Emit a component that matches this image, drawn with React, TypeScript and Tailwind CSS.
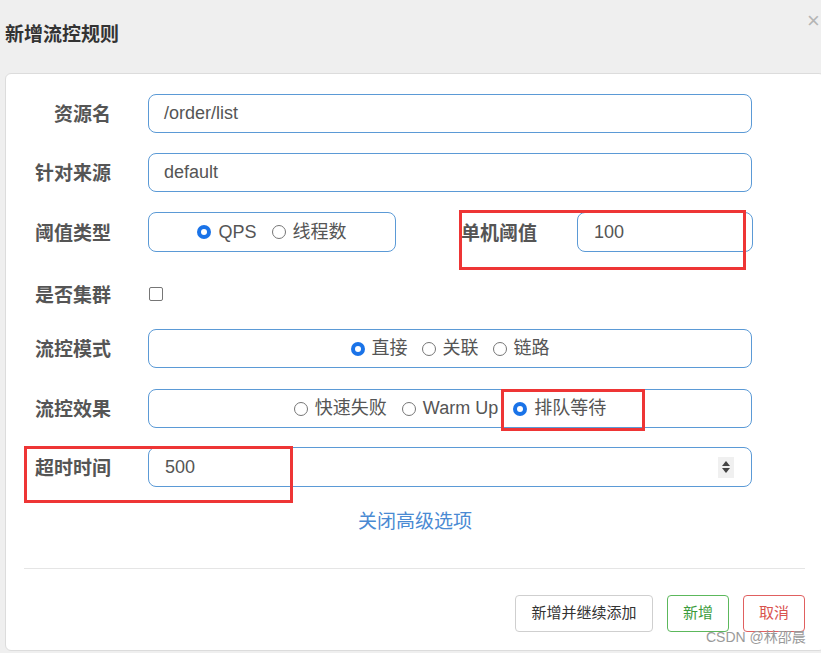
import React from 'react';

const font = { fontFamily: '"Liberation Sans", "Noto Sans CJK SC", sans-serif' };

const Radio: React.FC<{ label: string; checked?: boolean }> = ({ label, checked }) => (
  <span className="flex items-center gap-[7px]">
    {checked ? (
      <span className="w-[14px] h-[14px] rounded-full bg-[#1a73e8] flex items-center justify-center">
        <span className="w-[6px] h-[6px] rounded-full bg-white" />
      </span>
    ) : (
      <span className="w-[14px] h-[14px] rounded-full border border-[#767676] bg-white" />
    )}
    <span>{label}</span>
  </span>
);

const Label: React.FC<{ text: string }> = ({ text }) => (
  <div className="w-[105px] shrink-0 pt-[4px] text-right font-bold text-[19px] text-[#555]">{text}</div>
);

const Box: React.FC<{ children: React.ReactNode; className?: string }> = ({ children, className }) => (
  <div className={'h-[39px] border border-[#5b9ad6] rounded-[8px] flex items-center text-[18px] text-[#555] ' + (className || '')}>
    {children}
  </div>
);

const App: React.FC = () => {
  return (
    <div className="relative w-[821px] h-[653px] bg-[#efefef] overflow-hidden" style={font}>
      {/* header */}
      <div className="h-[73px] flex items-start">
        <div className="mt-[21px] ml-[5px] font-bold text-[19px] text-[#333]">新增流控规则</div>
        <div className="absolute left-[807px] top-[4px] text-[22px] text-[#b5b5b5]">×</div>
      </div>

      {/* card */}
      <div className="ml-[5px] w-[820px] h-[578px] bg-white border border-[#dcdcdc] rounded-[6px] pt-[20px] flex flex-col">
        <div className="flex items-center h-[39px]">
          <Label text="资源名" />
          <Box className="ml-[37px] w-[604px] pl-[15px]">/order/list</Box>
        </div>

        <div className="flex items-center h-[39px] mt-[20px]">
          <Label text="针对来源" />
          <Box className="ml-[37px] w-[604px] pl-[15px]">default</Box>
        </div>

        <div className="flex items-center h-[40px] mt-[20px]">
          <Label text="阈值类型" />
          <Box className="ml-[37px] w-[248px] h-[40px] justify-center gap-[15px]">
            <Radio label="QPS" checked />
            <Radio label="线程数" />
          </Box>
          <div className="ml-[65px] w-[80px] pt-[4px] font-bold text-[19px] text-[#555]">单机阈值</div>
          <Box className="ml-[36px] w-[176px] h-[40px] pl-[16px]">100</Box>
        </div>

        <div className="flex items-center h-[40px] mt-[22px]">
          <Label text="是否集群" />
          <span className="ml-[38px] w-[14px] h-[14px] border border-[#767676] rounded-[2px] bg-white" />
        </div>

        <div className="flex items-center h-[39px] mt-[15px]">
          <Label text="流控模式" />
          <Box className="ml-[37px] w-[604px] justify-center gap-[14px]">
            <Radio label="直接" checked />
            <Radio label="关联" />
            <Radio label="链路" />
          </Box>
        </div>

        <div className="flex items-center h-[39px] mt-[21px]">
          <Label text="流控效果" />
          <Box className="ml-[37px] w-[604px] justify-center gap-[15px]">
            <Radio label="快速失败" />
            <Radio label="Warm Up" />
            <Radio label="排队等待" checked />
          </Box>
        </div>

        <div className="flex items-center h-[40px] mt-[19px]">
          <Label text="超时时间" />
          <Box className="ml-[37px] w-[604px] h-[40px] pl-[16px] pr-[17px] justify-between">
            <span>500</span>
            <span className="w-[16px] h-[21px] bg-[#f0f0f0] flex flex-col items-center justify-center gap-[2px]">
              <svg width="8" height="5" viewBox="0 0 8 5"><path d="M4 0L8 5H0Z" fill="#444" /></svg>
              <svg width="8" height="5" viewBox="0 0 8 5"><path d="M0 0H8L4 5Z" fill="#444" /></svg>
            </span>
          </Box>
        </div>

        <div className="mt-[21px] text-center text-[19px] text-[#4a8ad3]">关闭高级选项</div>

        <div className="mt-[31px] ml-[18px] w-[781px] border-t border-[#e5e5e5]" />

        <div className="mt-[26px] flex justify-end gap-[14px] pr-[19px]">
          <button className="w-[138px] h-[37px] border border-[#cfcfcf] rounded-[4px] text-[15px] text-[#333] bg-white">
            新增并继续添加
          </button>
          <button className="w-[62px] h-[37px] border border-[#5cb85c] rounded-[4px] text-[15px] text-[#3c9c3c] bg-white">
            新增
          </button>
          <button className="w-[62px] h-[37px] border border-[#e06060] rounded-[4px] text-[15px] text-[#d9534f] bg-white">
            取消
          </button>
        </div>
      </div>

      {/* annotations */}
      <div className="absolute left-[459px] top-[210px] w-[287px] h-[60px] border-[3px] border-[#ee3535]" />
      <div className="absolute left-[501px] top-[389px] w-[144px] h-[42px] border-[3px] border-[#ee3535]" />
      <div className="absolute left-[24px] top-[446px] w-[269px] h-[57px] border-[3px] border-[#ee3535]" />
      <div className="absolute left-[706px] top-[627px] text-[14px] text-[#9a9a9a]">CSDN @林邵晨</div>
    </div>
  );
};

export default App;
